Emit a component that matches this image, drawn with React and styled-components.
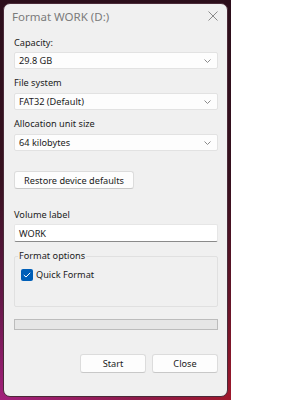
import React from "react";
import styled, { createGlobalStyle } from "styled-components";

const Global = createGlobalStyle`
  html, body { margin: 0; padding: 0; background: #ffffff; }
  body { font-family: "Noto Sans", "Open Sans", sans-serif; }
`;

const Frame = styled.div`
  width: 231px;
  height: 400px;
  box-sizing: border-box;
  padding: 3px;
  background:
    linear-gradient(180deg, #2c0e1b 0%, #37111f 45%, rgba(60, 18, 38, 0.6) 75%, rgba(60, 18, 38, 0) 100%),
    linear-gradient(90deg, #a3207c 0%, #8e1a4a 60%, #a0182c 100%);
`;

const Dialog = styled.div`
  box-sizing: border-box;
  width: 225px;
  height: 394px;
  background: #f0f0f0;
  border: 1px solid #4a2a38;
  border-radius: 7px;
  display: flex;
  flex-direction: column;
  padding: 0 9px 0 10px;
  color: #1b1b1b;
  font-size: 9.2px;
`;

const TitleBar = styled.div`
  height: 24px;
  display: flex;
  align-items: center;
  justify-content: space-between;
  margin-left: -2px;
`;

const Title = styled.span`
  color: #7b7b7b;
  font-size: 11.5px;
`;

const Label = styled.div`
  height: 14px;
  line-height: 14px;
  margin-top: ${(p) => p.$mt || 0}px;
  margin-bottom: ${(p) => p.$mb ?? 2}px;
`;

const Select = styled.div`
  box-sizing: border-box;
  height: 17px;
  background: #fdfdfd;
  border: 1px solid #e2e2e2;
  border-radius: 2px;
  display: flex;
  align-items: center;
  justify-content: space-between;
  padding: 0 6px 0 4px;
`;

const Input = styled.div`
  box-sizing: border-box;
  height: 18px;
  background: #ffffff;
  border: 1px solid #e6e6e6;
  border-bottom: 1px solid #8a8a8a;
  border-radius: 2px;
  display: flex;
  align-items: center;
  padding: 0 4px;
`;

const Button = styled.div`
  box-sizing: border-box;
  height: ${(p) => p.$h || 18}px;
  width: ${(p) => p.$w}px;
  margin-top: ${(p) => p.$mt || 0}px;
  background: #fdfdfd;
  border: 1px solid #dcdcdc;
  border-bottom-color: #c8c8c8;
  border-radius: 3px;
  display: flex;
  align-items: center;
  justify-content: center;
  white-space: nowrap;
`;

const Group = styled.div`
  box-sizing: border-box;
  margin-top: 14px;
  height: 51px;
  border: 1px solid #e0e0e0;
  border-radius: 2px;
  position: relative;
  padding: 8px 6px 0 6px;
`;

const GroupLabel = styled.span`
  position: absolute;
  top: -8px;
  left: 3px;
  padding: 0 1px;
  background: #f0f0f0;
  line-height: 14px;
`;

const CheckRow = styled.div`
  display: flex;
  align-items: center;
  gap: 3px;
  margin-top: 3px;
`;

const CheckBox = styled.span`
  width: 12px;
  height: 12px;
  border-radius: 2px;
  background: #005fb8;
  display: flex;
  align-items: center;
  justify-content: center;
`;

const Progress = styled.div`
  box-sizing: border-box;
  margin-top: 12px;
  height: 11px;
  background: #e6e6e6;
  border: 1px solid #bcbcbc;
`;

const Footer = styled.div`
  margin-top: 24px;
  display: flex;
  justify-content: flex-end;
  gap: 6px;
`;

const Chevron = () => (
  <svg width="7" height="4" viewBox="0 0 7 4">
    <path d="M0.5 0.5 L3.5 3.5 L6.5 0.5" fill="none" stroke="#8a8a8a" strokeWidth="1" />
  </svg>
);

const CloseIcon = () => (
  <svg width="10" height="10" viewBox="0 0 10 10">
    <path d="M0.5 0.5 L9.5 9.5 M9.5 0.5 L0.5 9.5" fill="none" stroke="#8a8a8a" strokeWidth="1" />
  </svg>
);

export default function App() {
  return (
    <>
      <Global />
      <Frame>
        <Dialog>
          <TitleBar>
            <Title>Format WORK (D:)</Title>
            <CloseIcon />
          </TitleBar>
          <Label $mt={8}>Capacity:</Label>
          <Select>
            <span>29.8 GB</span>
            <Chevron />
          </Select>
          <Label $mt={7} $mb={3}>File system</Label>
          <Select>
            <span>FAT32 (Default)</span>
            <Chevron />
          </Select>
          <Label $mt={7} $mb={3}>Allocation unit size</Label>
          <Select>
            <span>64 kilobytes</span>
            <Chevron />
          </Select>
          <Button $w={120} $mt={20}>Restore device defaults</Button>
          <Label $mt={19}>Volume label</Label>
          <Input>WORK</Input>
          <Group>
            <GroupLabel>Format options</GroupLabel>
            <CheckRow>
              <CheckBox>
                <svg width="8" height="6" viewBox="0 0 8 6">
                  <path d="M0.8 3 L3 5 L7.2 0.8" fill="none" stroke="#ffffff" strokeWidth="1" />
                </svg>
              </CheckBox>
              <span>Quick Format</span>
            </CheckRow>
          </Group>
          <Progress />
          <Footer>
            <Button $w={66} $h={19}>Start</Button>
            <Button $w={66} $h={19}>Close</Button>
          </Footer>
        </Dialog>
      </Frame>
    </>
  );
}
